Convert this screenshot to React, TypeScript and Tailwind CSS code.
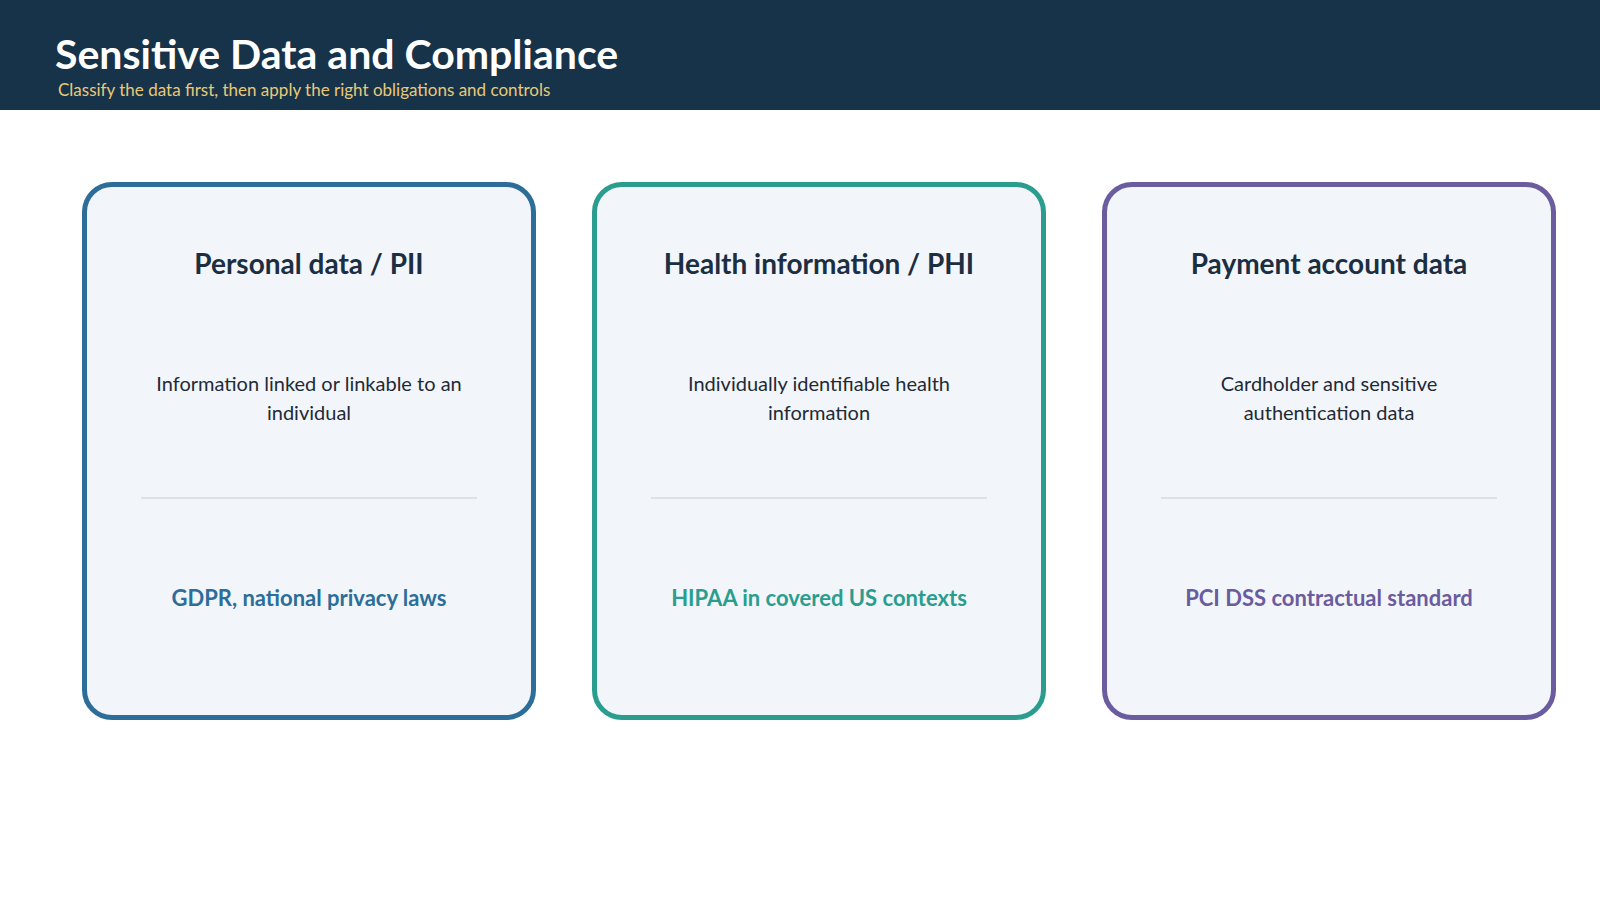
const cards = [
  {
    title: 'Personal data / PII',
    desc: 'Information linked or linkable to an individual',
    law: 'GDPR, national privacy laws',
    border: 'border-[#2c6e99]',
    text: 'text-[#2c6e99]',
  },
  {
    title: 'Health information / PHI',
    desc: 'Individually identifiable health information',
    law: 'HIPAA in covered US contexts',
    border: 'border-[#2a9d8f]',
    text: 'text-[#2a9d8f]',
  },
  {
    title: 'Payment account data',
    desc: 'Cardholder and sensitive authentication data',
    law: 'PCI DSS contractual standard',
    border: 'border-[#6b5b9f]',
    text: 'text-[#6b5b9f]',
  },
];

export default function App() {
  return (
    <div className="w-[1600px] h-[900px] bg-white font-[Lato,sans-serif] overflow-hidden">
      <header className="h-[110px] bg-[#173349] pl-[55px] pt-[28px]">
        <h1 className="text-[41px] leading-[52px] font-bold text-white whitespace-nowrap">Sensitive Data and Compliance</h1>
        <p className="text-[17px] leading-[20px] text-[#e8c97a] pl-[3px] whitespace-nowrap">
          Classify the data first, then apply the right obligations and controls
        </p>
      </header>
      <main className="flex gap-[56px] pl-[82px] pt-[72px]">
        {cards.map((c) => (
          <div
            key={c.title}
            className={`w-[454px] h-[538px] rounded-[30px] border-[5px] ${c.border} bg-[#f2f6fa] flex flex-col items-center px-[54px]`}
          >
            <h2 className="mt-[58px] h-[36px] text-[28px] leading-[36px] font-bold text-[#1b2e42] whitespace-nowrap">{c.title}</h2>
            <p className="mt-[88px] h-[60px] text-[20px] leading-[29px] text-[#1f2a36] text-center">{c.desc}</p>
            <div className="mt-[68px] w-full h-[2px] bg-[#dde2e8]" />
            <p className={`mt-[84px] text-[22px] leading-[30px] font-bold whitespace-nowrap ${c.text}`}>{c.law}</p>
          </div>
        ))}
      </main>
    </div>
  );
}
